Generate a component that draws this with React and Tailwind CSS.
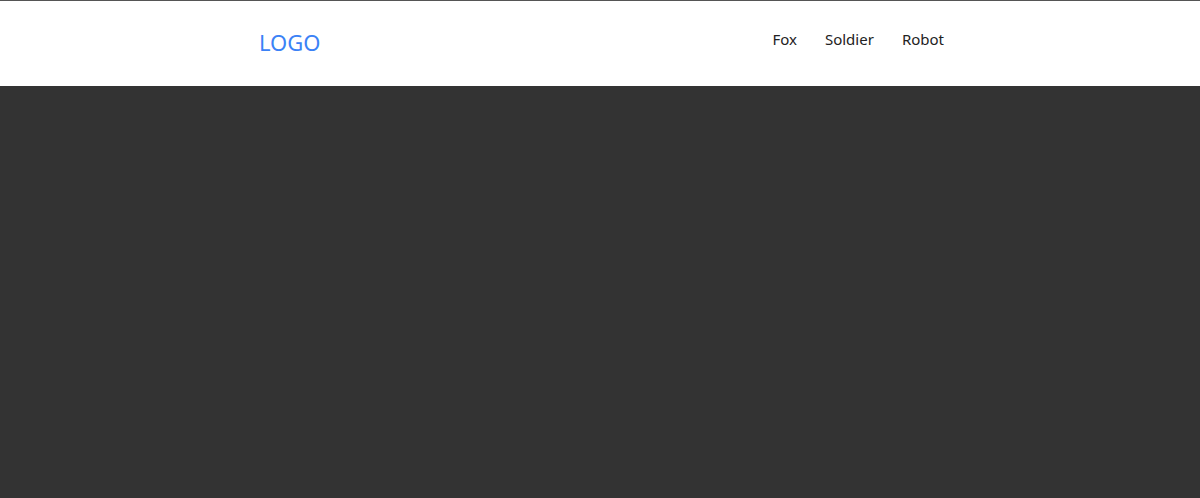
import React from "react";

const links = ["Fox", "Soldier", "Robot"];

const App = () => {
  return (
    <div className="min-h-[498px] flex flex-col bg-[#333333] font-['Noto_Sans',sans-serif]">
      <header className="h-[86px] bg-white border-t border-[#555555]">
        <div className="w-[720px] mx-auto h-full flex items-center justify-between">
          <a className="ml-[19px] text-[22px] text-[#3b82f6] leading-none -mt-[3px]" href="#">
            LOGO
          </a>
          <nav className="flex -mt-[8px] mr-[2px]">
            {links.map((link) => (
              <a
                key={link}
                href="#"
                className="px-[14px] text-[15px] text-[#222222]"
              >
                {link}
              </a>
            ))}
          </nav>
        </div>
      </header>
      <main className="flex-1 bg-[#333333]"></main>
    </div>
  );
};

export default App;
